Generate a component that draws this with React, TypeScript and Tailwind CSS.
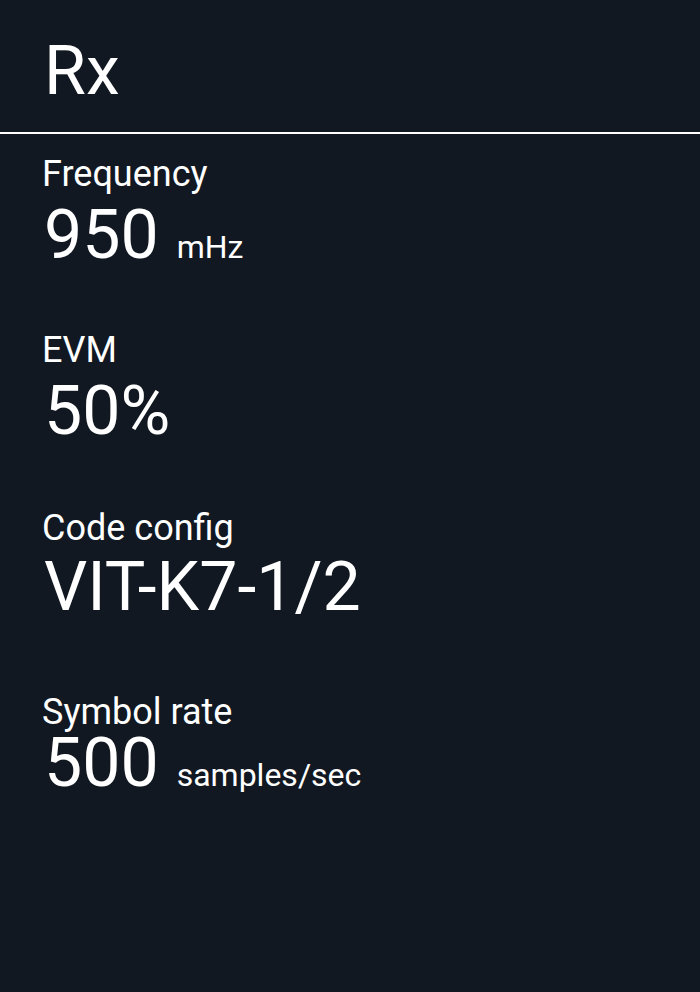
type Reading = { label: string; value: string; unit?: string; spacing: string };

const readings: Reading[] = [
  { label: "Frequency", value: "950", unit: "mHz", spacing: "mt-5 gap-2.5" },
  { label: "EVM", value: "50%", spacing: "mt-16 gap-2.5" },
  { label: "Code config", value: "VIT-K7-1/2", spacing: "mt-[66px] gap-2" },
  { label: "Symbol rate", value: "500", unit: "samples/sec", spacing: "mt-[74px]" },
];

export default function App() {
  return (
    <main className="min-h-screen bg-[#111822] font-[Roboto,sans-serif] text-white">
      <header className="border-b-2 border-white px-[44px] pt-[33px] pb-[23px]">
        <h1 className="text-[68px] leading-[76px]">Rx</h1>
      </header>
      <dl className="px-[42px]">
        {readings.map((r) => (
          <div key={r.label} className={`flex flex-col ${r.spacing}`}>
            <dt className="text-[36px] leading-[40px]">{r.label}</dt>
            <dd className="flex items-baseline gap-[18px] pl-0.5 text-[68px] leading-[62px]">
              <span>{r.value}</span>
              {r.unit && <span className="text-[32px] leading-8">{r.unit}</span>}
            </dd>
          </div>
        ))}
      </dl>
    </main>
  );
}
